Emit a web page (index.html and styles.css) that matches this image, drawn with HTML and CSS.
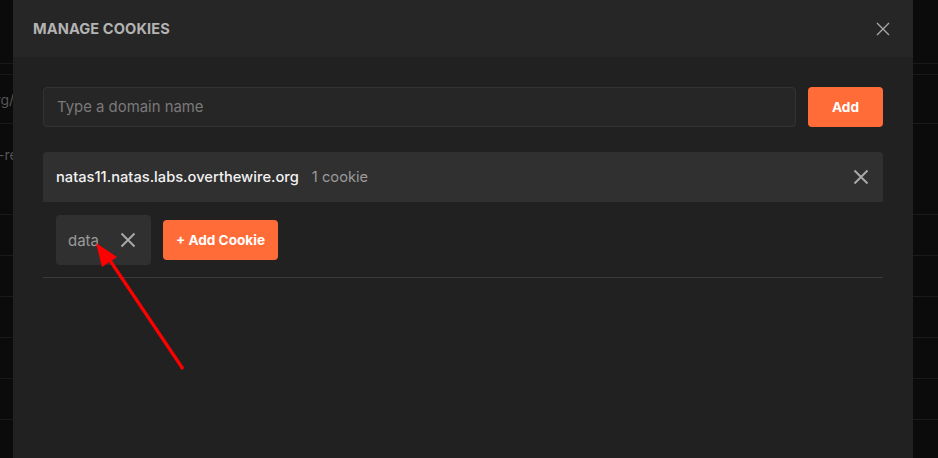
FILE: index.html
```html
<!DOCTYPE html>
<html>
<head>
<meta charset="utf-8">
<link rel="stylesheet" href="styles.css">
</head>
<body>
<div class="page">
  <div class="bg-row bg-top"></div>
  <div class="bg-row bg-thin"></div>
  <div class="bg-row bg-url"><span class="bg-text">natas11.natas.labs.overthewire.org/</span></div>
  <div class="bg-row bg-tall"><span class="bg-text">cookie-re</span></div>
  <div class="bg-row bg-line"></div>
  <div class="bg-row bg-line"></div>
  <div class="bg-row bg-line"></div>
  <div class="bg-row bg-line"></div>
  <div class="bg-row bg-line"></div>
  <div class="bg-row bg-line"></div>
</div>

<div class="modal">
  <div class="modal-header">
    <span class="modal-title">MANAGE COOKIES</span>
    <svg class="close" width="14" height="14" viewBox="0 0 14 14"><path d="M1 1L13 13M13 1L1 13" stroke="#a6a6a6" stroke-width="1.4" fill="none"/></svg>
  </div>
  <div class="modal-body">
    <div class="add-row">
      <div class="input">Type a domain name</div>
      <button class="btn btn-add">Add</button>
    </div>
    <div class="domain">
      <div class="domain-head">
        <span class="domain-name">natas11.natas.labs.overthewire.org</span>
        <span class="domain-count">1 cookie</span>
        <svg class="domain-x" width="16" height="16" viewBox="0 0 16 16"><path d="M1.5 1.5L14.5 14.5M14.5 1.5L1.5 14.5" stroke="#a8a8a8" stroke-width="2" fill="none"/></svg>
      </div>
      <div class="cookies">
        <div class="chip">
          <span class="chip-name">data</span>
          <svg width="16" height="16" viewBox="0 0 16 16"><path d="M1.5 1.5L14.5 14.5M14.5 1.5L1.5 14.5" stroke="#a8a8a8" stroke-width="2" fill="none"/></svg>
        </div>
        <button class="btn btn-cookie">+ Add Cookie</button>
      </div>
    </div>
  </div>
</div>

<svg class="arrow" width="938" height="458" viewBox="0 0 938 458">
  <line x1="183" y1="369" x2="107" y2="256" stroke="#ff0000" stroke-width="3.2"/>
  <polygon points="96,243 117,257 102,267" fill="#ff0000"/>
</svg>
</body>
</html>
```

FILE: styles.css
```css
* { box-sizing: border-box; }
html, body { margin: 0; padding: 0; }
body {
  width: 938px;
  height: 458px;
  overflow: hidden;
  background: #0b0b0b;
  font-family: Inter, "Noto Sans", sans-serif;
  position: relative;
}
.page { display: flex; flex-direction: column; }
.bg-row { border-bottom: 1px solid #1a1a1a; display: flex; align-items: center; }
.bg-top { height: 64px; }
.bg-thin { height: 11px; }
.bg-url { height: 49px; }
.bg-tall { height: 91px; align-items: flex-start; padding-top: 22px; }
.bg-line { height: 41px; }
.bg-text {
  color: #555;
  font-size: 14px;
  white-space: nowrap;
  margin-left: -218px;
}
.bg-tall .bg-text { margin-left: -46px; }

.modal {
  position: absolute;
  left: 13px;
  top: 0;
  width: 900px;
  height: 470px;
  background: #212121;
  display: flex;
  flex-direction: column;
}
.modal-header {
  height: 57px;
  background: #262626;
  display: flex;
  align-items: center;
  justify-content: space-between;
  padding: 0 23px 0 20px;
}
.modal-title {
  color: #b3b3b3;
  font-weight: 700;
  font-size: 14.6px;
  letter-spacing: 0.1px;
}
.modal-body { padding: 30px 30px 0 30px; }
.add-row { display: flex; gap: 12px; }
.input {
  flex: 1;
  height: 40px;
  background: #262626;
  border: 1px solid #333;
  border-radius: 4px;
  color: #7a7a7a;
  font-size: 14.9px;
  display: flex;
  align-items: center;
  padding-left: 13px;
}
.btn {
  background: #ff6c37;
  color: #fff;
  border: none;
  border-radius: 4px;
  font-family: Inter, "Noto Sans", sans-serif;
  font-weight: 700;
  font-size: 13.6px;
  height: 40px;
  padding: 0;
}
.btn-add { width: 75px; }
.domain { margin-top: 25px; border-bottom: 1px solid #3a3a3a; }
.domain-head {
  height: 50px;
  background: #303030;
  border-radius: 4px 4px 0 0;
  display: flex;
  align-items: center;
  padding: 0 14px 0 13px;
  font-size: 14.7px;
}
.domain-name { color: #f2f2f2; font-weight: 500; }
.domain-count { color: #9a9a9a; margin-left: 13px; flex: 1; }
.cookies {
  display: flex;
  align-items: center;
  gap: 12px;
  padding: 13px 13px 12px;
}
.chip {
  height: 50px;
  width: 95px;
  background: #303030;
  border-radius: 4px;
  display: flex;
  align-items: center;
  padding: 0 15px 0 12px;
  justify-content: space-between;
}
.chip-name { color: #9a9a9a; font-size: 15px; }
.btn-cookie { width: 115px; }
.arrow { position: absolute; left: 0; top: 0; }
```
